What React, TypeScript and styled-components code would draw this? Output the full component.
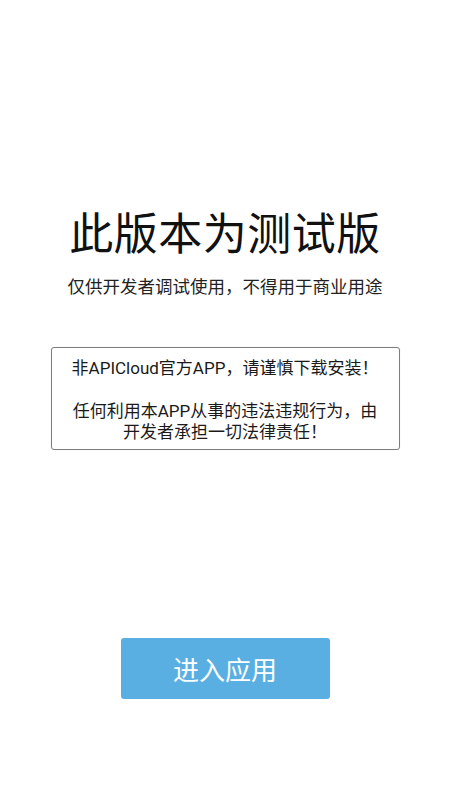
import React from "react";
import styled, { createGlobalStyle } from "styled-components";

const GlobalStyle = createGlobalStyle`
  html, body {
    margin: 0;
    padding: 0;
    background: #ffffff;
  }
  body {
    font-family: "Noto Sans CJK SC", "Noto Sans", sans-serif;
  }
  * { box-sizing: border-box; }
`;

const Page = styled.div`
  width: 450px;
  height: 800px;
  display: flex;
  flex-direction: column;
  align-items: center;
  padding-top: 205px;
  background: #ffffff;
`;

const Title = styled.h1`
  margin: 0;
  font-size: 44px;
  line-height: 52px;
  font-weight: 400;
  color: #111111;
  letter-spacing: 0.5px;
`;

const Subtitle = styled.p`
  margin: 15px 0 0;
  font-size: 17.5px;
  line-height: 28px;
  color: #222222;
`;

const Notice = styled.div`
  margin-top: 47px;
  width: 349px;
  border: 1.5px solid #7d7d7d;
  border-radius: 3px;
  padding: 10px 6px 6px;
  display: flex;
  flex-direction: column;
  gap: 22px;
  text-align: center;
  box-shadow: 0 0 1px rgba(0, 0, 0, 0.2);
`;

const NoticeText = styled.p`
  margin: 0;
  font-family: Roboto, "Noto Sans CJK SC", sans-serif;
  font-size: 17px;
  line-height: 21px;
  color: #1a1a1a;
`;

const EnterButton = styled.button`
  margin-top: 188px;
  width: 209px;
  height: 61px;
  border: none;
  border-radius: 3px;
  background: #5aafe2;
  color: #ffffff;
  font-family: inherit;
  font-size: 26px;
  line-height: 61px;
  padding: 0;
  cursor: pointer;
`;

export default function App() {
  return (
    <>
      <GlobalStyle />
      <Page>
        <Title>此版本为测试版</Title>
        <Subtitle>仅供开发者调试使用，不得用于商业用途</Subtitle>
        <Notice>
          <NoticeText>非APICloud官方APP，请谨慎下载安装！</NoticeText>
          <NoticeText>
            任何利用本APP从事的违法违规行为，由
            <br />
            开发者承担一切法律责任！
          </NoticeText>
        </Notice>
        <EnterButton>进入应用</EnterButton>
      </Page>
    </>
  );
}
